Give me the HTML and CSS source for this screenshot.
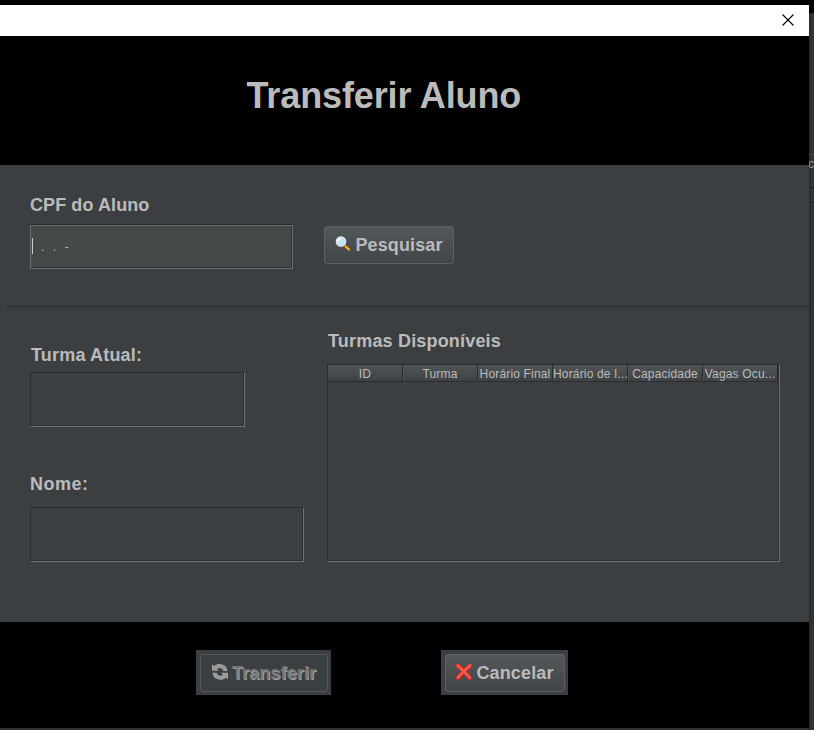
FILE: index.html
```html
<!DOCTYPE html>
<html lang="pt-BR">
<head>
<meta charset="utf-8">
<title>Transferir Aluno</title>
<link rel="stylesheet" href="styles.css">
</head>
<body>
<div class="desktop">
  <main class="dialog">
    <div class="titlebar">
      <svg class="close" viewBox="0 0 12 12"><path d="M.5.5l11 11M11.5.5l-11 11"/></svg>
    </div>
    <header class="heading"><h1>Transferir Aluno</h1></header>
    <section class="search">
      <div class="search-field">
        <label class="label cpf-label">CPF do Aluno</label>
        <div class="field cpf"><span class="caret"></span><span class="mask"><span>.</span><span>.</span><span>-</span></span></div>
      </div>
      <button class="button find">
        <svg class="icon" viewBox="0 0 16 16">
          <path d="M9 9l5 4.600" stroke="#73521f" stroke-width="3" stroke-linecap="round"/>
          <path d="M10.500 10.300l3.500 3.200" stroke="#f5ac2c" stroke-width="2.200" stroke-linecap="round"/>
          <circle cx="6" cy="5.500" r="4.700" fill="#c3e0fa" stroke="#e4ebf4" stroke-width="1.200"/>
          <path d="M3 5.200a3 3 0 0 1 3-2.700" stroke="#fff" stroke-width="1.500" fill="none"/>
        </svg>
        <span>Pesquisar</span>
      </button>
    </section>
    <hr class="rule">
    <section class="details">
      <div class="student">
        <label class="label turma-label">Turma Atual:</label>
        <div class="field turma"></div>
        <label class="label nome-label">Nome:</label>
        <div class="field nome"></div>
      </div>
      <div class="classes">
        <h2 class="label">Turmas Disponíveis</h2>
        <div class="field table">
          <div class="table-head">
            <span>ID</span><span>Turma</span><span>Horário Final</span><span>Horário de I...</span><span>Capacidade</span><span>Vagas Ocu...</span>
          </div>
        </div>
      </div>
    </section>
    <footer class="actions">
      <div class="frame transfer">
        <button class="button disabled" disabled>
          <svg class="icon" viewBox="0 0 16 16" fill="#999b9c">
            <path d="M0 0l2 1.900C5.500-.9 12-.7 14.600 3.800L15.500 7h-4.200C10.600 4 7.300 3.200 5.100 4.900L7 6.800H0z"/>
            <path d="M16 15.500l-2-1.700C10.500 16.900 4 16.500 1.400 12L.4 8.700h4.300c.8 3 4 3.800 6.200 2.200L9 8.700h7z"/>
          </svg>
          <span>Transferir</span>
        </button>
      </div>
      <div class="frame cancel">
        <button class="button">
          <svg class="icon" viewBox="0 0 18 18" fill="none" stroke-linecap="round">
            <path d="M2.800 2.800Q8 7 14.800 15M15 2.800Q8 8 3 15" stroke="#c9271f" stroke-width="4.300"/>
            <path d="M2.800 2.600Q8 7 14.800 14.700M15 2.600Q8 8 3 14.700" stroke="#fa5547" stroke-width="2.900"/>
          </svg>
          <span>Cancelar</span>
        </button>
      </div>
    </footer>
  </main>
  <aside class="backdrop"><div class="sliver"><span>c</span></div><div class="sliver-row"></div></aside>
</div>
</body>
</html>
```
FILE: styles.css
```css
* { box-sizing: border-box; }
body {
  margin: 0;
  width: 814px;
  height: 730px;
  overflow: hidden;
  background: #2f3031;
  color: #bbb;
  font-family: "Liberation Sans", Arial, sans-serif;
}
.desktop {
  display: grid;
  grid-template-columns: 809px 5px;
  height: 730px;
}
.dialog {
  display: flex;
  flex-direction: column;
  height: 728px;
  border-top: 5px solid #000;
  background: #3c3f41;
}
.titlebar {
  display: flex;
  justify-content: flex-end;
  align-items: center;
  flex: 0 0 31px;
  padding: 0 15px 1px 0;
  background: #fff;
}
.close { width: 12px; height: 12px; stroke: #000; stroke-width: 1.1; }
.heading {
  flex: 0 0 129px;
  padding: 39px 0 0 246.500px;
  background: #000;
}
h1 { margin: 0; font-size: 36px; line-height: 42px; letter-spacing: -.13px; white-space: nowrap; }
.label {
  display: block;
  margin: 0;
  font-size: 18px;
  font-weight: bold;
  line-height: 20px;
  letter-spacing: .18px;
  white-space: nowrap;
}
.cpf-label { letter-spacing: .09px; }
.search {
  display: flex;
  align-items: flex-start;
  gap: 31px;
  flex: 0 0 141px;
  padding: 30px 30px 0;
}
.field {
  border: 1px solid #292b2d;
  border-right-color: #717475;
  border-bottom-color: #717475;
  box-shadow: inset -1px -1px #2b2d2f;
}
.cpf {
  display: flex;
  align-items: center;
  width: 263px;
  height: 44px;
  margin-top: 10px;
  padding-left: 1px;
  border-color: #6b6e70;
  background: #45494a;
  box-shadow: inset -1px -1px #303335, 0 -1px #292b2d;
}
.caret { width: 1px; height: 16px; margin-bottom: 2px; background: #ccc; }
.mask { display: flex; gap: 8.500px; margin-left: 8px; font-size: 12px; line-height: 14px; }
.button {
  display: flex;
  align-items: center;
  justify-content: center;
  gap: 4px;
  height: 38px;
  padding: 0;
  border: 1px solid #5d6163;
  border-radius: 3px;
  background: linear-gradient(#53585a, #414547);
  color: #bbb;
  font: bold 18px/20px "Liberation Sans", Arial, sans-serif;
  letter-spacing: .13px;
}
.icon { flex: none; width: 16px; height: 16px; }
.find { width: 130px; margin-top: 31px; }
.find .icon { margin-bottom: 2px; }
.rule { flex: 0 0 1px; width: 803px; margin: 0 0 0 6px; border: 0; background: #2a2c2e; }
.details {
  display: grid;
  grid-template-columns: 274px 453px;
  column-gap: 23px;
  align-items: start;
  flex: 0 0 315px;
  padding: 24px 0 0 30px;
}
.turma-label { margin: 14px 0 7px 1px; }
.turma { width: 215px; height: 55px; }
.nome-label { margin: 47px 0 13px; letter-spacing: .5px; }
.nome { height: 55px; }
.classes .label { padding-left: 1px; }
.table { height: 198px; margin-top: 13px; }
.table-head {
  display: grid;
  grid-template-columns: repeat(6, 75px);
  width: 450px;
  height: 17px;
  border-bottom: 1px solid #2b2d2f;
  background: linear-gradient(#505456, #3e4244);
  font-size: 12px;
  line-height: 18px;
  letter-spacing: .16px;
  text-align: center;
  white-space: nowrap;
}
.table-head span { height: 16px; border-right: 1px solid #292b2d; box-shadow: 1px 0 #505456; }
.table-head span:last-child { box-shadow: none; }
.actions {
  display: flex;
  align-items: flex-start;
  gap: 110px;
  flex: 0 0 106px;
  padding: 28px 0 0 196px;
  background: #000;
}
.frame { height: 45px; padding: 4px 3px 3px 4px; background: #3c3f41; }
.transfer { width: 135px; }
.cancel { width: 127px; }
.frame .button { width: 100%; }
.frame .disabled {
  border-color: #55585a;
  background: #3c3f41;
  color: #777;
  text-shadow: 1px 1px #a0a0a0;
}
.disabled .icon { margin-bottom: 2px; }
.cancel .button { gap: 3px; padding-right: 1px; }
.cancel .icon { width: 18px; height: 18px; margin-bottom: 2px; }
.backdrop { border-top: 13px solid #000; background: linear-gradient(90deg, #28292b, #313335 3px); overflow: hidden; }
.sliver { height: 34px; margin-top: 141px; border-top: 1px solid #44474a; border-bottom: 1px solid #222; font-size: 12px; line-height: 18px; color: #999; }
.sliver span { margin-left: -1px; }
.sliver-row { height: 15px; border-bottom: 1px solid #222; }
```
